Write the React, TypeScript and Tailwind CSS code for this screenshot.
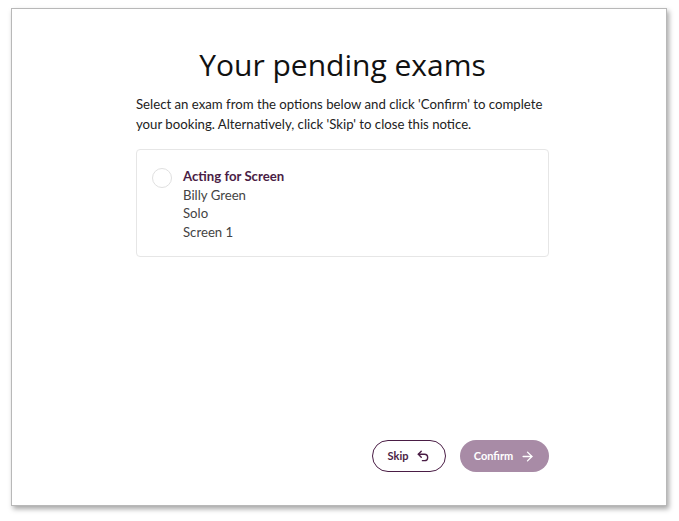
import React from "react";

function UndoIcon() {
  return (
    <svg width="14" height="14" viewBox="0 0 24 24" fill="none" stroke="currentColor" strokeWidth="2.4" strokeLinecap="round" strokeLinejoin="round">
      <path d="M9 14 4 9l5-5" />
      <path d="M4 9h10.5a5.5 5.5 0 0 1 5.5 5.5a5.5 5.5 0 0 1-5.5 5.5H11" />
    </svg>
  );
}

function ArrowRightIcon() {
  return (
    <svg width="15" height="15" viewBox="0 0 24 24" fill="none" stroke="currentColor" strokeWidth="2.2" strokeLinecap="round" strokeLinejoin="round">
      <path d="M5 12h14" />
      <path d="m12 5 7 7-7 7" />
    </svg>
  );
}

export default function App() {
  return (
    <div className="min-h-screen bg-white pt-[8px] pl-[11px]" style={{ fontFamily: "'Open Sans', sans-serif" }}>
      <div className="w-[656px] h-[498px] border border-[#b8b8b8] bg-white shadow-[2px_3px_5px_rgba(0,0,0,0.35)] flex flex-col pl-[124px] pt-[38px] pb-[33px]">
        <div className="w-[413px] flex flex-col flex-1">
          <h1 className="text-center text-[30px] leading-[36px] text-[#111] font-medium">Your pending exams</h1>
          <p className="mt-[11px] text-[13.2px] leading-[20px] text-[#222]" style={{ fontFamily: "Lato, sans-serif" }}>
            Select an exam from the options below and click 'Confirm' to complete your booking. Alternatively, click 'Skip' to close this notice.
          </p>
          <div className="mt-[15px] h-[108px] border border-[#e6e6e6] rounded-[4px] flex pl-[15px] pt-[17px]">
            <div className="w-[20px] h-[20px] rounded-full border border-[#e0e0e0] mt-[1px]" />
            <div className="ml-[11px] text-[13.2px] leading-[18.7px] text-[#444]" style={{ fontFamily: "Lato, sans-serif" }}>
              <div className="font-bold text-[#4a1d45]">Acting for Screen</div>
              <div>Billy Green</div>
              <div>Solo</div>
              <div>Screen 1</div>
            </div>
          </div>
          <div className="flex-1" />
          <div className="flex justify-end gap-[14px]" style={{ fontFamily: "Lato, sans-serif" }}>
            <button className="h-[32px] w-[74px] rounded-full border-[1.5px] border-[#4a1d45] text-[#4a1d45] text-[11px] font-bold flex items-center justify-center gap-[8px]">
              Skip <UndoIcon />
            </button>
            <button className="h-[32px] w-[89px] rounded-full bg-[#a88ba6] text-white text-[11px] font-bold flex items-center justify-center gap-[7px]">
              Confirm <ArrowRightIcon />
            </button>
          </div>
        </div>
      </div>
    </div>
  );
}
